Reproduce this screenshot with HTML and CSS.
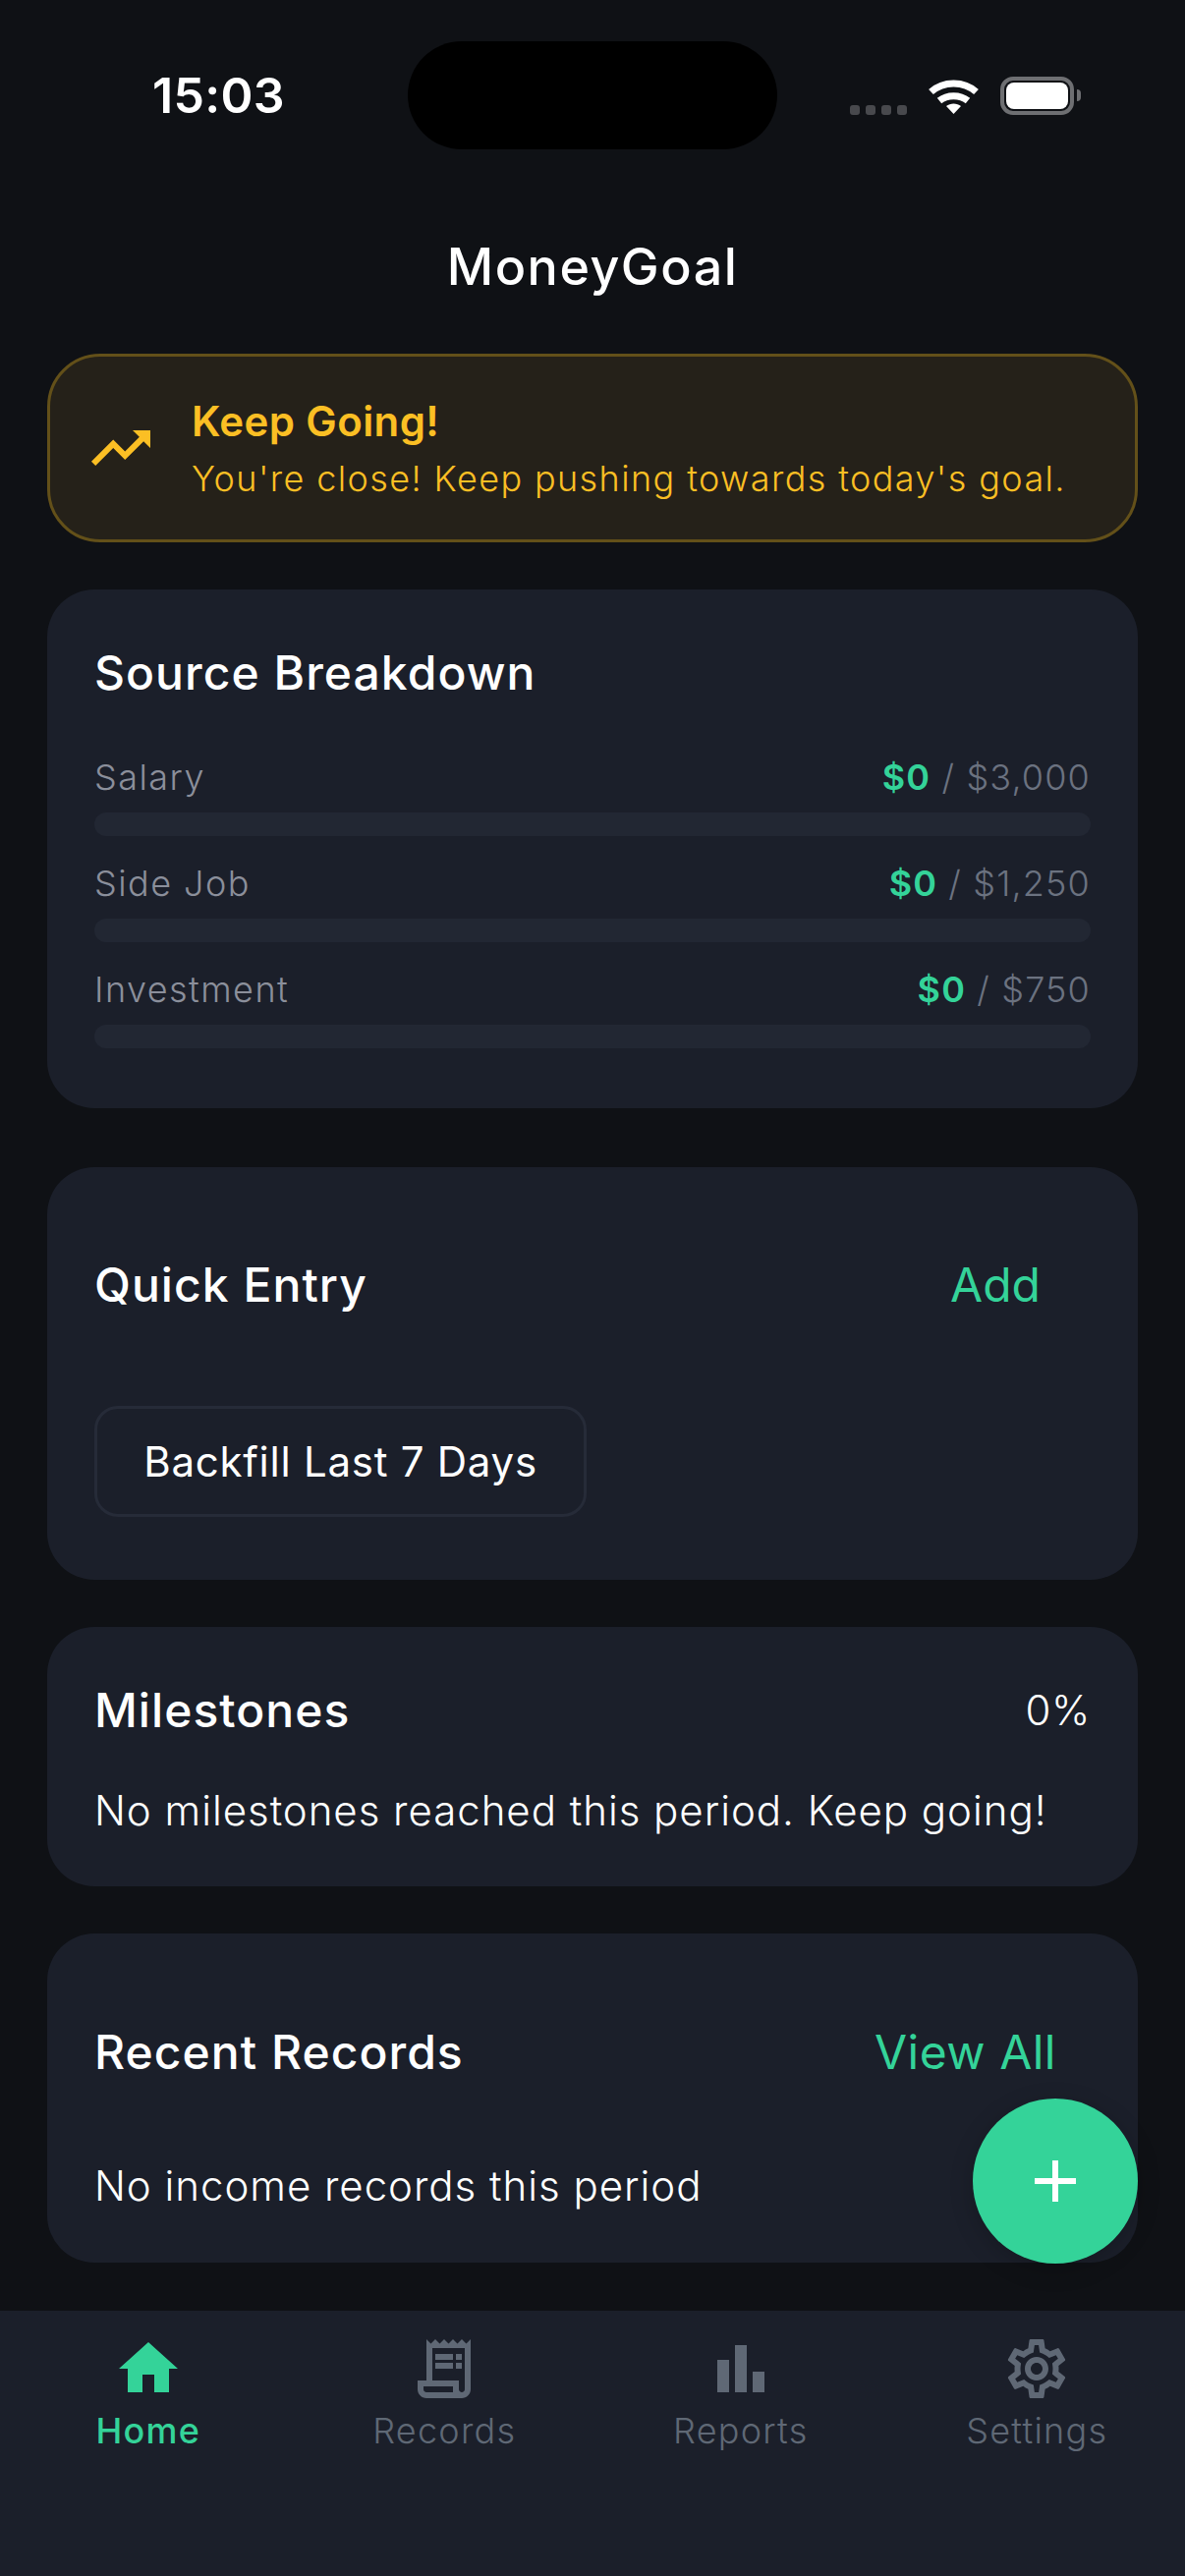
FILE: index.html
```html
<!DOCTYPE html>
<html lang="en">
<head>
    <meta charset="UTF-8">
    <meta name="viewport" content="width=device-width, initial-scale=1.0">
    <title>MoneyGoal</title>
    <link rel="stylesheet" href="styles.css">
</head>
<body>
    <div class="status-bar">
        <span class="time">15:03</span>
        <div class="island"></div>
        <div class="status-icons">
            <div class="signal"><i></i><i></i><i></i><i></i></div>
            <svg class="wifi" width="51" height="37" viewBox="0 0 51 37">
                <path d="M2.5 14.5C15 3 36 3 48.5 14.5" fill="none" stroke="#fff" stroke-width="7"/>
                <path d="M11 23.5C19 17 32 17 40 23.5" fill="none" stroke="#fff" stroke-width="7"/>
                <path d="M25.5 37L18 29C22 25.5 29 25.5 33 29Z" fill="#fff"/>
            </svg>
            <div class="battery"><div class="battery-level"></div></div>
            <div class="battery-cap"></div>
        </div>
    </div>

    <header class="app-header"><h1>MoneyGoal</h1></header>

    <main class="content">
        <div class="alert">
            <svg class="alert-icon" viewBox="0 0 24 24"><path d="M16 6l2.29 2.29-4.88 4.88-4-4L2 16.59 3.41 18l6-6 4 4 6.3-6.29L22 12V6z"/></svg>
            <div>
                <div class="alert-title">Keep Going!</div>
                <div class="alert-text">You're close! Keep pushing towards today's goal.</div>
            </div>
        </div>

        <section class="card sources">
            <h2>Source Breakdown</h2>
            <div class="source">
                <div class="source-head"><span class="source-name">Salary</span><span class="source-value"><b>$0</b> / $3,000</span></div>
                <div class="bar"></div>
            </div>
            <div class="source">
                <div class="source-head"><span class="source-name">Side Job</span><span class="source-value"><b>$0</b> / $1,250</span></div>
                <div class="bar"></div>
            </div>
            <div class="source">
                <div class="source-head"><span class="source-name">Investment</span><span class="source-value"><b>$0</b> / $750</span></div>
                <div class="bar"></div>
            </div>
        </section>

        <section class="card quick">
            <div class="card-head">
                <h2>Quick Entry</h2>
                <span class="link link-add">Add</span>
            </div>
            <div class="backfill">Backfill Last 7 Days</div>
        </section>

        <section class="card milestones">
            <div class="card-head">
                <h2>Milestones</h2>
                <span class="percent">0%</span>
            </div>
            <p class="note">No milestones reached this period. Keep going!</p>
        </section>

        <section class="card recent">
            <div class="card-head">
                <h2>Recent Records</h2>
                <span class="link link-all">View All</span>
            </div>
            <p class="note">No income records this period</p>
        </section>
    </main>

    <div class="fab">
        <svg width="42" height="42" viewBox="0 0 42 42"><path d="M18 0h6v18h18v6H24v18h-6V24H0v-6h18z" fill="#fff"/></svg>
    </div>

    <nav class="tab-bar">
        <div class="tab active">
            <svg viewBox="0 0 24 24"><path d="M10 20v-6h4v6h5v-8h3L12 3 2 12h3v8z"/></svg>
            <span>Home</span>
        </div>
        <div class="tab">
            <svg viewBox="0 0 24 24"><path d="M19.5 3.5L18 2l-1.5 1.5L15 2l-1.5 1.5L12 2l-1.5 1.5L9 2 7.5 3.5 6 2v14H3v3c0 1.66 1.34 3 3 3h12c1.66 0 3-1.34 3-3V2l-1.5 1.5zM15 20H6c-.55 0-1-.45-1-1v-1h10v2zm4-1c0 .55-.45 1-1 1s-1-.45-1-1v-3H8V5h11v14z"/><path d="M9 7h6v2H9zm7 0h2v2h-2zm-7 3h6v2H9zm7 0h2v2h-2z"/></svg>
            <span>Records</span>
        </div>
        <div class="tab">
            <svg viewBox="0 0 24 24"><path d="M4 9h4v11H4zM16 13h4v7h-4zM10 4h4v16h-4z"/></svg>
            <span>Reports</span>
        </div>
        <div class="tab">
            <svg viewBox="0 0 24 24"><path d="M19.43 12.98c.04-.32.07-.64.07-.98 0-.34-.03-.66-.07-.98l2.11-1.65c.19-.15.24-.42.12-.64l-2-3.46c-.09-.16-.26-.25-.44-.25-.06 0-.12.01-.17.03l-2.49 1c-.52-.4-1.08-.73-1.69-.98l-.38-2.65C14.46 2.18 14.25 2 14 2h-4c-.25 0-.46.18-.49.42l-.38 2.65c-.61.25-1.17.59-1.69.98l-2.49-1c-.06-.02-.12-.03-.18-.03-.17 0-.34.09-.43.25l-2 3.46c-.13.22-.07.49.12.64l2.11 1.65c-.04.32-.07.65-.07.98 0 .33.03.66.07.98l-2.11 1.65c-.19.15-.24.42-.12.64l2 3.46c.09.16.26.25.44.25.06 0 .12-.01.17-.03l2.49-1c.52.4 1.08.73 1.69.98l.38 2.65c.03.24.24.42.49.42h4c.25 0 .46-.18.49-.42l.38-2.65c.61-.25 1.17-.59 1.69-.98l2.49 1c.06.02.12.03.18.03.17 0 .34-.09.43-.25l2-3.46c.12-.22.07-.49-.12-.64l-2.11-1.65zm-1.98-1.71c.04.31.05.52.05.73 0 .21-.02.43-.05.73l-.14 1.13.89.7 1.08.84-.7 1.21-1.27-.51-1.04-.42-.9.68c-.43.32-.84.56-1.25.73l-1.06.43-.16 1.13-.2 1.35h-1.4l-.19-1.35-.16-1.13-1.06-.43c-.43-.18-.83-.41-1.23-.71l-.91-.7-1.06.43-1.27.51-.7-1.21 1.08-.84.89-.7-.14-1.13c-.03-.31-.05-.54-.05-.74s.02-.43.05-.73l.14-1.13-.89-.7-1.08-.84.7-1.21 1.27.51 1.04.42.9-.68c.43-.32.84-.56 1.25-.73l1.06-.43.16-1.13.2-1.35h1.39l.19 1.35.16 1.13 1.06.43c.43.18.83.41 1.23.71l.91.7 1.06-.43 1.27-.51.7 1.21-1.07.85-.89.7.14 1.13zM12 8c-2.21 0-4 1.79-4 4s1.79 4 4 4 4-1.79 4-4-1.79-4-4-4zm0 6c-1.1 0-2-.9-2-2s.9-2 2-2 2 .9 2 2-.9 2-2 2z"/></svg>
            <span>Settings</span>
        </div>
    </nav>
</body>
</html>
```

FILE: styles.css
```css
* {
    box-sizing: border-box;
}
body {
    font-family: Inter, "Noto Sans", sans-serif;
    background-color: #0f1115;
    color: #fff;
    width: 1206px;
    height: 2622px;
    margin: 0;
    overflow: hidden;
    position: relative;
    display: flex;
    flex-direction: column;
}
h1, h2, p {
    margin: 0;
}

/* status bar */
.status-bar {
    display: flex;
    align-items: center;
    padding: 42px 106px 0 155px;
    height: 152px;
    flex-shrink: 0;
}
.time {
    width: 260px;
    font-size: 50px;
    font-weight: 600;
    line-height: 60px;
    letter-spacing: 0.3px;
}
.island {
    width: 376px;
    height: 110px;
    background-color: #000;
    border-radius: 55px;
}
.status-icons {
    display: flex;
    align-items: center;
    margin-left: auto;
}
.signal {
    display: flex;
    gap: 6px;
    margin: 29px 22px 0 0;
}
.signal i {
    width: 10px;
    height: 10px;
    border-radius: 3px;
    background-color: #48494d;
}
.wifi {
    margin-right: 22px;
}
.battery {
    width: 75px;
    height: 39px;
    padding: 2px;
    border: 4px solid #6e6f72;
    border-radius: 13px;
}
.battery-level {
    height: 100%;
    background-color: #fff;
    border-radius: 8px;
}
.battery-cap {
    width: 4px;
    height: 12px;
    margin-left: 3px;
    background-color: #6e6f72;
    border-radius: 0 6px 6px 0;
}

.app-header {
    height: 208px;
    flex-shrink: 0;
    display: flex;
    justify-content: center;
    align-items: center;
    padding-top: 32px;
}
h1 {
    font-size: 52px;
    font-weight: 500;
    line-height: 64px;
    letter-spacing: 1.5px;
}

.content {
    flex: 1;
    display: flex;
    flex-direction: column;
    gap: 48px;
    padding: 0 48px;
}

/* alert banner */
.alert {
    height: 192px;
    display: flex;
    align-items: center;
    gap: 36px;
    padding: 0 36px;
    background-color: #252119;
    border: 3px solid #635019;
    border-radius: 54px;
}
.alert-icon {
    width: 72px;
    height: 72px;
    fill: #fbbf24;
    flex-shrink: 0;
}
.alert-title {
    font-size: 42px;
    font-weight: 600;
    line-height: 54px;
    letter-spacing: 0.4px;
    color: #fbbf24;
}
.alert-text {
    font-size: 36px;
    font-weight: 300;
    line-height: 48px;
    margin-top: 7px;
    letter-spacing: 1.39px;
    color: #fbbf24;
}

/* cards */
.card {
    background-color: #1b1f2a;
    border-radius: 48px;
    padding: 48px;
}
h2 {
    font-size: 48px;
    font-weight: 500;
    line-height: 60px;
    letter-spacing: 1.05px;
}
.card-head {
    display: flex;
    justify-content: space-between;
    align-items: center;
}

.sources {
    height: 528px;
}
.sources h2 {
    margin-top: 7px;
}
.source {
    margin-top: 24px;
}
.sources h2 + .source {
    margin-top: 52px;
}
.source-head {
    display: flex;
    justify-content: space-between;
    font-size: 36px;
    font-weight: 300;
    line-height: 48px;
    margin-bottom: 12px;
}
.source-name {
    color: #8b8f9b;
    letter-spacing: 1.45px;
}
.source-value {
    color: #6b7280;
    letter-spacing: 1.15px;
}
.source-value b {
    color: #34d399;
    font-weight: 600;
}
.bar {
    height: 24px;
    background-color: #222733;
    border-radius: 12px;
}

.quick {
    height: 420px;
    margin-top: 12px;
}
.link {
    color: #34d399;
    font-size: 48px;
    line-height: 60px;
    letter-spacing: 0.5px;
}
.link-add {
    margin-right: 51px;
    letter-spacing: 0;
}
.link-all {
    margin-right: 35px;
}
.quick .card-head {
    margin-top: 42px;
}
.backfill {
    width: 501px;
    height: 113px;
    margin-top: 93px;
    display: flex;
    justify-content: center;
    align-items: center;
    font-size: 42px;
    letter-spacing: 0.75px;
    border: 3px solid #262b38;
    border-radius: 24px;
}

.milestones {
    height: 264px;
}
.milestones .card-head {
    margin-top: 7px;
}
.percent {
    font-size: 42px;
    font-weight: 300;
    line-height: 60px;
    letter-spacing: 0.6px;
}
.note {
    font-size: 42px;
    font-weight: 300;
    line-height: 54px;
    letter-spacing: 0.97px;
}
.milestones .note {
    margin-top: 45px;
}
.recent {
    height: 335px;
}
.recent .card-head {
    margin-top: 43px;
}
.recent .note {
    margin-top: 79px;
}

/* floating button */
.fab {
    position: absolute;
    left: 990px;
    top: 2136px;
    width: 168px;
    height: 168px;
    border-radius: 50%;
    background-color: #34d399;
    box-shadow: 0 6px 24px rgba(0, 0, 0, 0.2);
    display: flex;
    justify-content: center;
    align-items: center;
}

/* bottom tabs */
.tab-bar {
    height: 270px;
    flex-shrink: 0;
    display: flex;
    padding-top: 23px;
    background-color: #1b1f2a;
}
.tab {
    flex: 1;
    display: flex;
    flex-direction: column;
    align-items: center;
    color: #5f6875;
    font-size: 36px;
    font-weight: 300;
    line-height: 44px;
    letter-spacing: 1.25px;
}
.tab svg {
    width: 72px;
    height: 72px;
    fill: #5f6875;
}
.tab span {
    margin-top: 5px;
}
.tab.active {
    color: #34d399;
    font-weight: 500;
    letter-spacing: 1.2px;
}
.tab.active svg {
    fill: #34d399;
}
```
